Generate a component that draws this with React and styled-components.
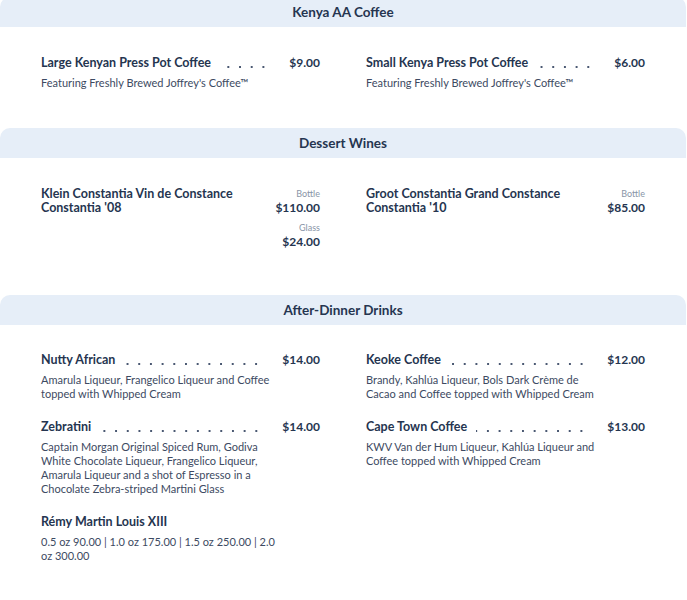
import styled, { createGlobalStyle } from 'styled-components'

const GlobalStyle = createGlobalStyle`
    html, body {
        margin: 0;
        padding: 0;
        background: #ffffff;
        font-family: Lato, "Open Sans", sans-serif;
        color: #253550;
    }
`;

const Page = styled.div`
    width: 686px;
    margin-top: -3px;
`;

const Section = styled.section`
    padding-bottom: ${props => props.$bottom || 20}px;
`;

const Band = styled.h2`
    margin: 0;
    height: 30px;
    line-height: 30px;
    background-color: #e6eef8;
    border-radius: 10px 10px 0 0;
    text-align: center;
    font-size: 13.5px;
    font-weight: 700;
    color: #253550;
`;

const Grid = styled.div`
    display: grid;
    grid-template-columns: 279px 279px;
    column-gap: 46px;
    padding: ${props => props.$top || 29}px 41px 0;
`;

const Item = styled.div`
    margin-bottom: 19px;
`;

const Head = styled.div`
    display: flex;
    align-items: flex-start;
`;

const Name = styled.div`
    font-size: 12.5px;
    line-height: 14px;
    font-weight: 700;
    color: #253550;
    max-width: ${props => props.$wide ? '205px' : 'none'};
`;

const Leader = styled.div`
    flex: 1;
    height: 14px;
    margin: 0 20px 0 9px;
    background-image: radial-gradient(circle, #4a5872 1px, transparent 1.4px);
    background-size: 11.7px 4px;
    background-position: right 0 bottom 1px;
    background-repeat: repeat-x;
`;

const Price = styled.div`
    font-size: 12px;
    line-height: 14px;
    font-weight: 700;
    color: #253550;
`;

const Desc = styled.p`
    margin: 6px 0 0;
    font-size: 11px;
    line-height: 14px;
    color: #3d4a62;
    max-width: 238px;
`;

const Spacer = styled.div`
    flex: 1;
`;

const Prices = styled.div`
    display: flex;
    flex-direction: column;
    align-items: flex-end;
`;

const Size = styled.div`
    text-align: right;
    margin-bottom: 6px;
`;

const SizeLabel = styled.div`
    font-size: 9px;
    line-height: 14px;
    color: #8995a7;
`;

function MenuItem({ name, price, desc }) {
    return (
        <Item>
            <Head>
                <Name>{name}</Name>
                {price && <Leader />}
                {price && <Price>{price}</Price>}
            </Head>
            {desc && <Desc>{desc}</Desc>}
        </Item>
    )
}

function WineItem({ name, sizes }) {
    return (
        <Item>
            <Head>
                <Name $wide>{name}</Name>
                <Spacer />
                <Prices>
                    {sizes.map(s => (
                        <Size key={s.label}>
                            <SizeLabel>{s.label}</SizeLabel>
                            <Price>{s.price}</Price>
                        </Size>
                    ))}
                </Prices>
            </Head>
        </Item>
    )
}

export default function App() {
    return (
        <Page>
            <GlobalStyle />
            <Section $bottom={19}>
                <Band>Kenya AA Coffee</Band>
                <Grid>
                    <MenuItem name="Large Kenyan Press Pot Coffee" price="$9.00" desc="Featuring Freshly Brewed Joffrey's Coffee™" />
                    <MenuItem name="Small Kenya Press Pot Coffee" price="$6.00" desc="Featuring Freshly Brewed Joffrey's Coffee™" />
                </Grid>
            </Section>
            <Section $bottom={21}>
                <Band>Dessert Wines</Band>
                <Grid>
                    <WineItem name="Klein Constantia Vin de Constance Constantia '08" sizes={[{ label: 'Bottle', price: '$110.00' }, { label: 'Glass', price: '$24.00' }]} />
                    <WineItem name="Groot Constantia Grand Constance Constantia '10" sizes={[{ label: 'Bottle', price: '$85.00' }]} />
                </Grid>
            </Section>
            <Section>
                <Band>After-Dinner Drinks</Band>
                <Grid $top={28}>
                    <MenuItem name="Nutty African" price="$14.00" desc="Amarula Liqueur, Frangelico Liqueur and Coffee topped with Whipped Cream" />
                    <MenuItem name="Keoke Coffee" price="$12.00" desc="Brandy, Kahlúa Liqueur, Bols Dark Crème de Cacao and Coffee topped with Whipped Cream" />
                    <MenuItem name="Zebratini" price="$14.00" desc="Captain Morgan Original Spiced Rum, Godiva White Chocolate Liqueur, Frangelico Liqueur, Amarula Liqueur and a shot of Espresso in a Chocolate Zebra-striped Martini Glass" />
                    <MenuItem name="Cape Town Coffee" price="$13.00" desc="KWV Van der Hum Liqueur, Kahlúa Liqueur and Coffee topped with Whipped Cream" />
                    <MenuItem name="Rémy Martin Louis XIII" desc="0.5 oz 90.00 | 1.0 oz 175.00 | 1.5 oz 250.00 | 2.0 oz 300.00" />
                </Grid>
            </Section>
        </Page>
    )
}
